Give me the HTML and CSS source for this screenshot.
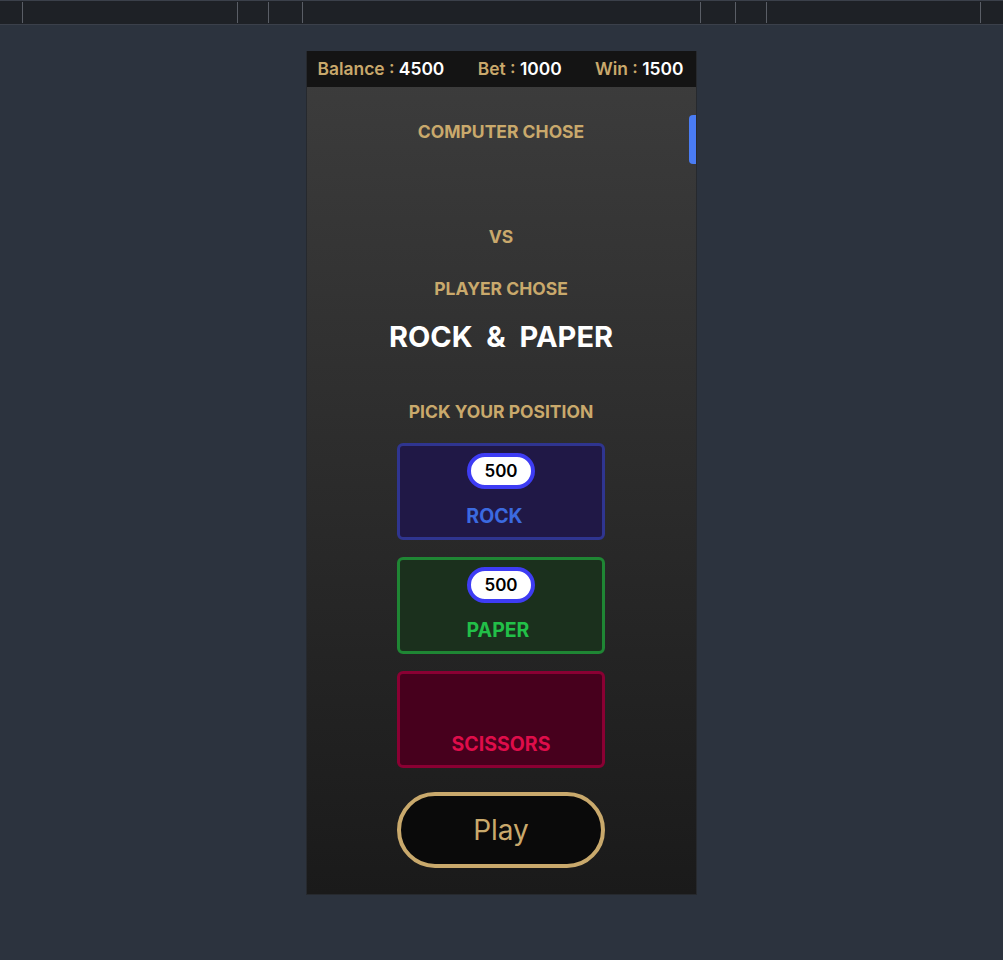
FILE: index.html
```html
<!DOCTYPE html>
<html>
<head>
<meta charset="utf-8">
<link rel="stylesheet" href="styles.css">
</head>
<body>
<div class="topbar">
  <span class="tick t1"></span><span class="tick t2"></span><span class="tick t3"></span><span class="tick t4"></span>
  <span class="tick t5"></span><span class="tick t6"></span><span class="tick t7"></span><span class="tick t8"></span>
</div>
<main class="stage">
  <section class="phone">
    <header class="stats">
      <span class="stat">Balance : <b>4500</b></span>
      <span class="stat">Bet : <b>1000</b></span>
      <span class="stat">Win : <b>1500</b></span>
    </header>
    <div class="scrollthumb"></div>
    <div class="content">
      <h2 class="label computer">COMPUTER CHOSE</h2>
      <div class="computer-pick"></div>
      <h2 class="label vs">VS</h2>
      <h2 class="label player">PLAYER CHOSE</h2>
      <div class="player-pick">ROCK&nbsp; &amp; &nbsp;PAPER</div>
      <h2 class="label pick">PICK YOUR POSITION</h2>
      <div class="options">
        <div class="option rock"><span class="chip">500</span><span class="name">ROCK</span></div>
        <div class="option paper"><span class="chip">500</span><span class="name">PAPER</span></div>
        <div class="option scissors"><span class="chip empty">500</span><span class="name">SCISSORS</span></div>
      </div>
      <button class="play">Play</button>
    </div>
  </section>
</main>
</body>
</html>
```
FILE: styles.css
```css
* { box-sizing: border-box; }
html, body { margin: 0; padding: 0; }
body {
  background: #2c333e;
  font-family: Inter, "Noto Sans", sans-serif;
  height: 960px;
  overflow: hidden;
}
.topbar {
  height: 25px;
  background: #1e2126;
  border-top: 1px solid #3b404a;
  border-bottom: 1px solid #3b404a;
  position: relative;
}
.tick {
  position: absolute;
  top: 1px;
  width: 1px;
  height: 21px;
  background: #5a5e66;
}
.t1 { left: 22px; } .t2 { left: 237px; } .t3 { left: 268px; } .t4 { left: 302px; }
.t5 { left: 700px; } .t6 { left: 735px; } .t7 { left: 766px; } .t8 { left: 980px; }
.stage {
  display: flex;
  justify-content: center;
  padding-top: 26px;
  padding-right: 1px;
}
.phone {
  width: 391px;
  height: 844px;
  background: linear-gradient(#3d3d3d, #1a1a1a);
  position: relative;
  overflow: hidden;
  border: 1px solid #26292e;
  border-top: none;
}
.stats {
  height: 36px;
  background: #141414;
  display: flex;
  justify-content: space-between;
  align-items: center;
  padding: 0 12px 1px 11px;
  color: #c9a96c;
  font-weight: 600;
  font-size: 17.4px;
}
.stat b { color: #fff; font-weight: 600; }
.scrollthumb {
  position: absolute;
  right: 0;
  top: 64px;
  width: 7px;
  height: 49px;
  background: #4a7cf3;
  border-radius: 4px 0 0 4px;
}
.content {
  display: flex;
  flex-direction: column;
  align-items: center;
}
.label {
  margin: 0;
  color: #c9a96c;
  font-size: 17.5px;
  font-weight: 700;
  line-height: 20px;
}
.computer { margin-top: 35px; }
.computer-pick { height: 85px; }
.vs { margin-top: 0; }
.player { margin-top: 32px; }
.player-pick {
  margin-top: 21px;
  color: #fff;
  font-size: 29px;
  font-weight: 700;
  line-height: 34px;
}
.pick { margin-top: 48px; }
.options {
  margin-top: 21px;
  display: flex;
  flex-direction: column;
  gap: 17px;
  width: 208px;
}
.option {
  height: 97px;
  border: 3px solid;
  border-radius: 6px;
  display: flex;
  flex-direction: column;
  align-items: center;
  padding-top: 7px;
}
.chip {
  width: 68px;
  height: 36px;
  border: 4px solid #3e3cf4;
  border-radius: 18px;
  background: #fff;
  color: #000;
  font-weight: 600;
  font-size: 17px;
  display: flex;
  align-items: center;
  justify-content: center;
}
.chip.empty { visibility: hidden; }
.name {
  margin-top: 16px;
  font-size: 19.5px;
  font-weight: 700;
  line-height: 22px;
}
.rock { background: #201846; border-color: #2f3590; }
.rock .name { color: #3b6ae0; margin-left: -13px; }
.paper { background: #1b301d; border-color: #1f8634; }
.paper .name { color: #22bf48; margin-left: -6px; }
.scissors { background: #47001d; border-color: #8a0033; }
.scissors .name { color: #de0d4a; }
.play {
  margin-top: 24px;
  width: 208px;
  height: 76px;
  border: 4px solid #c9a96c;
  border-radius: 38px;
  background: #0a0a0a;
  color: #c9a96c;
  font-family: Inter, "Noto Sans", sans-serif;
  font-size: 28px;
  font-weight: 400;
}
```
